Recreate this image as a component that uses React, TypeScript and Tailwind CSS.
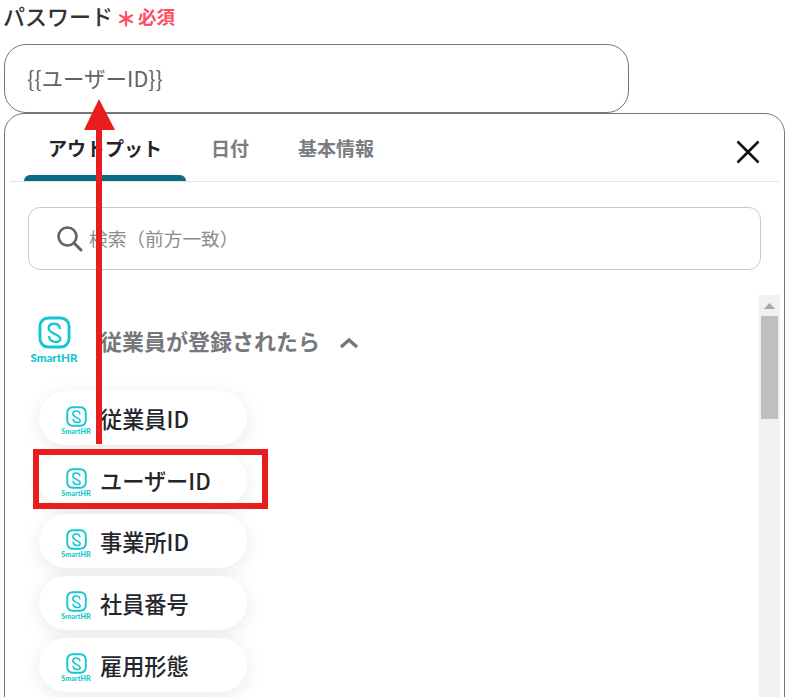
const FONT = "font-['Noto_Sans_CJK_JP','Noto_Sans',sans-serif]";

function Logo({ large }: { large?: boolean }) {
  const size = large ? 33 : 21;
  return (
    <div className={large ? "flex w-[46px] shrink-0 flex-col items-center" : "mt-[6px] flex w-[28px] shrink-0 flex-col items-center"}>
      <svg width={size} height={size} viewBox="0 0 34 34" fill="none">
        <rect x="2" y="2" width="30" height="30" rx="8.5" stroke="#14c6cf" strokeWidth="3" />
        <path
          d="M22.5 12.5 C21.5 6.5 11.5 6.5 11 12.5 C10.8 15.5 14 17 17 18.5 C20 20 23.2 21 23 24 C22.5 28 12.5 28 11.5 21.5"
          stroke="#14c6cf"
          strokeWidth="2.4"
          strokeLinecap="round"
          strokeLinejoin="round"
        />
      </svg>
      <span
        className={
          large
            ? "mt-[2px] font-['Lato',sans-serif] text-[11.6px] leading-[14px] font-black text-[#14c6cf]"
            : "font-['Lato',sans-serif] text-[7.2px] leading-[9px] font-black text-[#14c6cf]"
        }
      >
        SmartHR
      </span>
    </div>
  );
}

function Pill({ label }: { label: string }) {
  return (
    <div className="flex h-[54px] w-[208px] items-center gap-[10px] rounded-[27px] bg-white pl-[23px] shadow-[0_4px_20px_rgba(0,0,0,0.09)]">
      <Logo />
      <span className="text-[22.2px] leading-none font-medium text-[#24262b]">{label}</span>
    </div>
  );
}

export default function App() {
  return (
    <div className={`relative h-[697px] w-[792px] overflow-hidden bg-white ${FONT}`}>
      <div className="flex h-[44px] items-start pl-[3px]">
        <span className="text-[22px] leading-[30px] font-medium text-[#303338]">パスワード</span>
        <span className="mt-[6px] ml-[3px] text-[20px] leading-[26px] font-black text-[#ff4d63]">＊</span>
        <span className="mt-[3px] ml-[2px] text-[18.5px] leading-[26px] font-bold text-[#ff4d63]">必須</span>
      </div>

      <div className="ml-[4px] flex h-[69px] w-[625px] items-center rounded-[22px] border border-[#777] pl-[22px] text-[21.5px] text-[#5f6368]">
        {"{{ユーザーID}}"}
      </div>

      <div className="ml-[4px] h-[640px] w-[781px] rounded-[20px] border border-[#777] bg-white">
        <div className="mx-[5px] flex h-[68px] items-end border-b border-[#e3e3e3]">
          <div className="ml-[14px] flex h-[62px] w-[162px] flex-col items-center justify-between">
            <span className="mt-[15px] text-[19px] leading-[28px] font-bold text-[#24262b]">アウトプット</span>
            <div className="h-[6px] w-full rounded-t-[6px] bg-[#0b6b85]" />
          </div>
          <div className="flex h-[62px] w-[88px] justify-center">
            <span className="mt-[15px] text-[19px] leading-[28px] font-bold text-[#7a7d80]">日付</span>
          </div>
          <div className="ml-[12px] flex h-[62px] w-[100px] justify-center">
            <span className="mt-[15px] text-[19px] leading-[28px] font-bold text-[#7a7d80]">基本情報</span>
          </div>
          <div className="mr-[19px] mb-[17px] ml-auto">
            <svg width="24" height="24" viewBox="0 0 24 24" fill="none">
              <path d="M1.5 1.5 L22.5 22.5 M22.5 1.5 L1.5 22.5" stroke="#111" strokeWidth="2.6" />
            </svg>
          </div>
        </div>

        <div className="mx-[23px] mt-[25px] flex h-[63px] w-[733px] items-center rounded-[12px] border border-[#c8c8c8] pl-[27px]">
          <svg width="27" height="27" viewBox="0 0 27 27" fill="none">
            <circle cx="11.5" cy="11.5" r="9" stroke="#5f6368" strokeWidth="2.6" />
            <path d="M18 18 L25 25" stroke="#5f6368" strokeWidth="3" strokeLinecap="round" />
          </svg>
          <span className="ml-[6px] text-[18.7px] text-[#8a8d90]">検索（前方一致）</span>
        </div>

        <div className="mt-[25px] flex h-[402px] pl-[26px]">
          <div className="flex-1">
            <div className="mt-[22px] flex h-[46px] items-center">
              <Logo large />
              <span className="ml-[23px] text-[22px] leading-none font-bold text-[#76787b]">従業員が登録されたら</span>
              <svg className="mt-[5px] ml-[19px]" width="20" height="12" viewBox="0 0 20 12" fill="none">
                <path d="M2 10 L10 3 L18 10" stroke="#76787b" strokeWidth="3.4" />
              </svg>
            </div>
            <div className="mt-[28px] ml-[8px] flex flex-col gap-[7.7px]">
              <Pill label="従業員ID" />
              <Pill label="ユーザーID" />
              <Pill label="事業所ID" />
              <Pill label="社員番号" />
              <Pill label="雇用形態" />
            </div>
          </div>
          <div className="mr-[4px] flex w-[21px] flex-col items-center bg-[#f1f1f1]">
            <svg className="mt-[8px]" width="11" height="6" viewBox="0 0 11 6">
              <path d="M5.5 0 L11 6 H0 Z" fill="#a8a8a8" />
            </svg>
            <div className="mt-[7px] h-[103px] w-[17px] bg-[#bfbfbf]" />
          </div>
        </div>
      </div>

      <div className="absolute top-[449px] left-[33px] h-[60px] w-[235px] border-[6px] border-[#e81e1e]" />
      <svg className="absolute top-[98px] left-[82px]" width="34" height="346" viewBox="0 0 34 346">
        <path d="M14 30 H20 V346 H14 Z" fill="#e81e1e" />
        <path d="M17 1 L33 32 H2 Z" fill="#e81e1e" />
      </svg>
    </div>
  );
}
